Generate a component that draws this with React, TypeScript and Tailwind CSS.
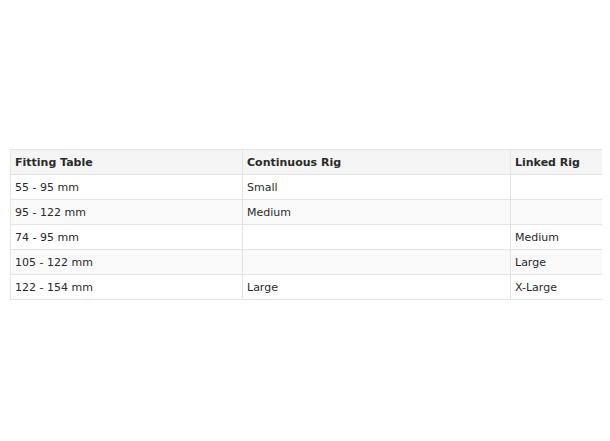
const ROWS = [
  ["55 - 95 mm", "Small", ""],
  ["95 - 122 mm", "Medium", ""],
  ["74 - 95 mm", "", "Medium"],
  ["105 - 122 mm", "", "Large"],
  ["122 - 154 mm", "Large", "X-Large"],
];

export default function App() {
  return (
    <div className="w-[610px] h-[441px] bg-white pl-[10px] pt-[149px] overflow-hidden font-['DejaVu_Sans',Verdana,sans-serif] text-[11px] text-[#2a2a2a]">
      <table className="w-[591px] border-collapse table-fixed">
        <colgroup>
          <col className="w-[232px]" />
          <col className="w-[268px]" />
          <col className="w-[91px]" />
        </colgroup>
        <thead>
          <tr className="bg-[#f5f5f5] h-[25px]">
            {["Fitting Table", "Continuous Rig", "Linked Rig"].map(h => (
              <th key={h} className="text-left font-bold pl-[4px] pr-[5px] pt-[3px] pb-0 border border-[#e4e4e4] border-r-0">{h}</th>
            ))}
          </tr>
        </thead>
        <tbody>
          {ROWS.map((r, i) => (
            <tr key={i} className={`h-[25px] ${i % 2 === 1 ? "bg-[#f9f9f9]" : "bg-white"}`}>
              {r.map((c, j) => (
                <td key={j} className="pl-[4px] pr-[5px] pt-[2px] pb-0 border border-[#e4e4e4] border-r-0 whitespace-nowrap">{c}</td>
              ))}
            </tr>
          ))}
        </tbody>
      </table>
    </div>
  );
}
